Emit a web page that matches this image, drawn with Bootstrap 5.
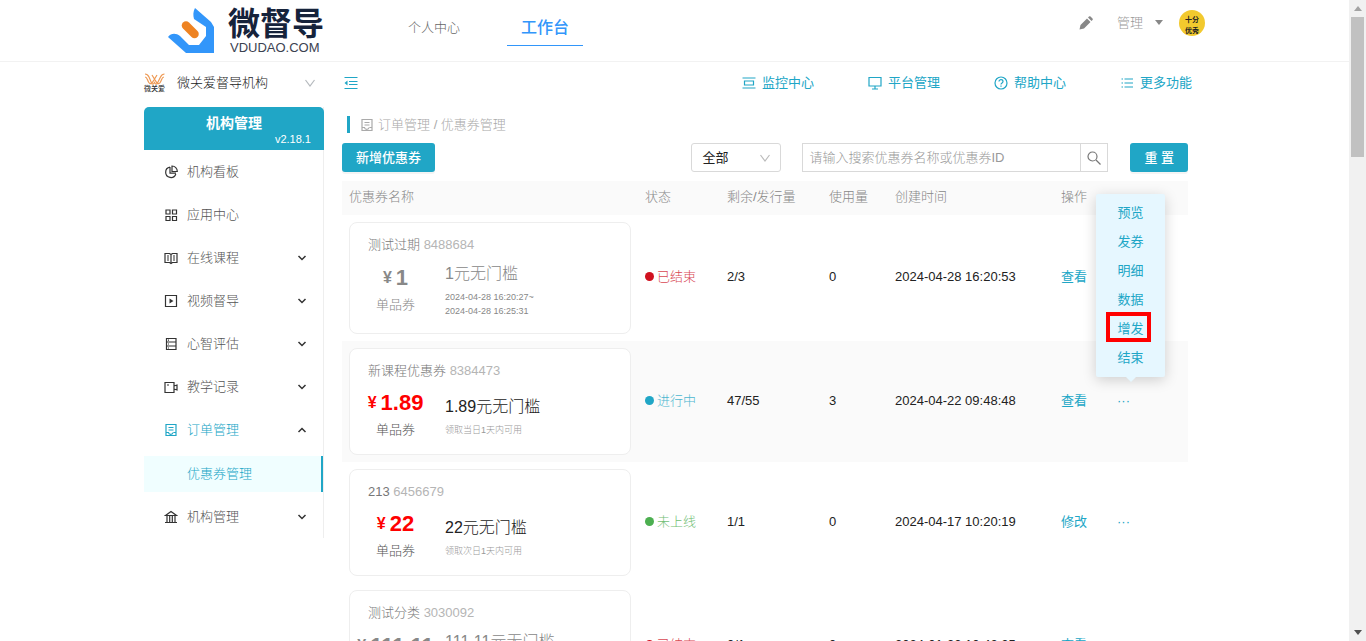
<!DOCTYPE html>
<html lang="zh-CN">
<head>
<meta charset="utf-8">
<meta name="viewport" content="width=device-width, initial-scale=1">
<title>优惠券管理</title>
<link href="https://cdn.jsdelivr.net/npm/bootstrap@5.3.0/dist/css/bootstrap.min.css" rel="stylesheet">
<style>
:root{--teal:#20a6c6;--ink:#222;--muted:#999}
body{font-family:"Liberation Sans","Noto Sans CJK SC",sans-serif;font-size:13px;line-height:20px;font-weight:300;color:var(--ink);background:#fff}
a{color:var(--teal);text-decoration:none}
svg{display:block;flex:none}
.ico{width:14px;height:14px;fill:none;stroke:currentColor;stroke-width:1.2}
.shell{height:100vh}
.pane{overflow-y:auto;overflow-x:hidden;scrollbar-width:none;min-width:0}
.pane::-webkit-scrollbar{display:none}
.wrap{max-width:1061px;margin:0 auto}
/* top bar */
.topbar{border-bottom:1px solid #f2f2f2}
.topbar .wrap{height:61px;padding-left:24px}
.brand-cn{font-size:32px;line-height:34px;font-weight:700;color:#16233b}
.brand-en{font-size:13px;line-height:14px;color:#3b4250;padding-left:2px}
.brand-gap{margin-right:84px}
.tabs{padding-bottom:6px}
.tab-link{color:#666}
.tab-on{font-size:16px;font-weight:500;line-height:24px;color:#3296fa;border-bottom:1px solid #3296fa;padding:6px 14px 5px;margin-left:47px}
.userbox{color:var(--muted);height:45px}
.avatar{width:26px;height:26px;border-radius:50%;background:#f2c92e;color:#222;font-size:7px;line-height:11px;font-weight:700}
.caret{border:4px solid transparent;border-top:5px solid #888;border-bottom:0}
/* tool row */
.tools{height:42px;margin-bottom:3px;padding-right:13px}
.org{width:180px;padding-right:7px}
.org-mini{font-size:7px;line-height:8px;font-weight:500;color:#333}
.quick{gap:54px}
.quick a{font-weight:400}
.quick span{padding-left:2px}
/* sidebar */
.side{width:180px;flex:none;align-self:flex-start;border-right:1px solid #eee}
.side-head{background:var(--teal);color:#fff;height:43px;border-radius:5px 5px 0 0;margin-right:-1px;padding:6px 13px 0}
.side-title{font-size:14px;font-weight:700}
.side-ver{font-size:11px;line-height:12px;font-weight:500}
.menu a{height:43px;padding:0 14px 0 20px;gap:9px;color:#555}
.menu .ico{color:#333}
.menu .open,.menu .open .ico:first-child{color:var(--teal)}
.menu .leaf{background:#f0feff;color:var(--teal);height:36px;margin:5px 0 3px;padding-left:43px;border-right:2px solid var(--teal)}
/* main */
.content{min-width:0;padding:0 17px 0 18px}
.crumb{height:17px;border-left:3px solid var(--teal);margin:9px 0 10px 5px;padding-left:10px;color:#aaa}
.crumb a{color:#aaa}
.filters{height:29px;margin-bottom:9px}
.btn-teal{--bs-btn-bg:var(--teal);--bs-btn-color:#fff;--bs-btn-hover-bg:#1c95b2;--bs-btn-hover-color:#fff;height:29px;padding:0 14px;border:0;border-radius:3px;font-size:13px;line-height:28px;font-weight:500;box-shadow:0 2px 0 #0000000b}
.form-select.kind{width:90px;height:29px;padding:0 10px;border:1px solid #d9d9d9;border-radius:3px;font-size:13px;font-weight:400;color:var(--ink);background-image:none}
.kind-box{margin-right:21px}
.kind-box svg{position:absolute;right:9px;top:8px;color:#bbb;pointer-events:none}
.search{width:306px;margin-right:22px}
.search .form-control{height:29px;border:1px solid #d9d9d9;border-radius:0;font-size:13px;font-weight:300;padding:0 6px;color:#555}
.search .form-control::placeholder{color:var(--muted)}
.search .btn{width:29px;height:29px;padding:0 6px;border:1px solid #d9d9d9;border-radius:0;color:#777}
.grid-table{table-layout:fixed;margin:0;border:0}
.grid-table th,.grid-table td{border:0;padding:7px;background:#fff;vertical-align:middle;box-shadow:none;color:var(--ink)}
.grid-table th{font-weight:300;color:#888;height:34px;padding:4px 7px 6px;background:#fafafa}
.grid-table td{padding-bottom:9px}
.grid-table td:first-child{padding-bottom:7px}
.grid-table td a,.more{font-weight:400}
.grid-table .tint td{background:#fafafa}
.c1{width:296px}.c2{width:82px}.c3{width:102px}.c4{width:66px}.c5{width:166px}
.dot{display:inline-block;width:9px;height:9px;border-radius:50%;background:currentColor;margin-right:3px}
.st-end{color:#d0111f}.st-run{color:var(--teal)}.st-off{color:#4caf50}
.st-txt{opacity:.8}
.coupon{border:1px solid #eee;border-radius:8px;background:#fff;padding:12px 18px 11px}
.coupon.dim{padding-bottom:15px}
.coupon-name{color:#777}
.coupon-name span{color:#b5b5b5}
.coupon-body{margin-top:8px;gap:22px}
.worth{width:55px;flex:none}
.price{height:28px;line-height:28px;font-size:22px;font-weight:700;color:red;gap:4px}
.price small{font-size:16px;font-weight:700}
.sort{line-height:26px;color:#555}
.deal{font-size:16px;line-height:22px;color:var(--ink)}
.terms{font-size:9px;line-height:14px;margin-top:5px;color:#999}
.dim .price,.dim .deal,.dim .sort,.dim .terms{color:#888}
.ops{gap:30px}
.more{border:0;background:none;color:var(--teal);padding:0;font-size:13px;line-height:18px}
/* floating action list */
.pop{position:absolute;left:35px;bottom:34px;width:69px;padding:4px 0 5px;background:#e6f7ff;border-radius:2px;box-shadow:0 3px 14px #0000002e;z-index:5}
.pop::after{content:"";position:absolute;left:30px;bottom:-5px;border:5px solid transparent;border-top-color:#e6f7ff;border-bottom:0}
.pop a{display:block;height:29px;line-height:29px;text-align:center;position:relative}
.pop .ring::after{content:"";position:absolute;left:10px;top:-2px;width:45px;height:30px;border:4px solid red}
/* scroll track */
.track{width:17px;flex:none;background:#f1f1f1;padding:6px 2px}
.thumb{height:140px;background:#c1c1c1}
.arr{border:4px solid transparent}
.arr-up{border-bottom:5px solid #a3a3a3;border-top:0;margin-bottom:6px}
.arr-down{border-top:5px solid #505050;border-bottom:0}
</style>
</head>
<body>
<svg width="0" height="0" class="d-none">
  <symbol id="down" viewBox="0 0 14 14"><path d="M2.500 4l4.500 6 4.500-6"/></symbol>
  <symbol id="chev" viewBox="0 0 14 14"><path d="M3.500 5L7 8.500 10.500 5" stroke-width="1.500"/></symbol>
  <symbol id="chevup" viewBox="0 0 14 14"><path d="M3.500 9L7 5.500 10.500 9" stroke-width="1.500"/></symbol>
  <symbol id="order" viewBox="0 0 14 14"><path d="M2 1.500h10v11H2zM4.500 4.500h5M4.500 7h5M2 9.500h2.500c.3 2.500 4.200 2.500 4.500 0M9.500 9.500H12"/></symbol>
</svg>
<div class="shell d-flex">
<div class="pane flex-grow-1">
  <header class="topbar">
    <div class="wrap d-flex align-items-center">
      <a href="#" class="d-flex align-items-center brand-gap">
        <svg width="48" height="46" viewBox="0 0 48 46"><path d="M0 29C3 25 8 25 12 28l9 9h10l7-9V19L26 11c-1-4-1-7 1-11l16 14 3 5v26H18z" fill="#3296fa"/><path d="M18 17.500L26.500 26" stroke="#ee8322" stroke-width="8.500" stroke-linecap="round"/></svg>
        <span class="ms-2 ps-1"><span class="brand-cn d-block">微督导</span><span class="brand-en d-block">VDUDAO.COM</span></span>
      </a>
      <nav class="tabs d-flex align-items-center">
        <a href="#" class="tab-link">个人中心</a>
        <a href="#" class="tab-on">工作台</a>
      </nav>
      <div class="userbox d-flex align-items-center ms-auto align-self-start">
        <svg width="14" height="14" viewBox="0 0 14 14" fill="#888"><path d="M.5 13.500l1-4.500L8 2.500l3.500 3.500L5 12.500zM9 1.600l1-1c.5-.5 1-.5 1.500 0l2 2c.5.500.5 1 0 1.500l-1 1z"/></svg>
        <a href="#" class="text-reset ms-4 me-1">管理</a><span class="caret ms-2"></span>
        <span class="avatar ms-3 text-center pt-1"><span class="d-block">十分</span><span class="d-block">优秀</span></span>
      </div>
    </div>
  </header>
  <div class="wrap">
    <div class="tools d-flex align-items-center">
      <div class="org d-flex align-items-center">
        <span class="me-2 pe-1">
          <svg width="21" height="12" viewBox="0 0 21 12" fill="none" stroke="#ee9a55" stroke-width="1.200"><path d="M1 1c2 0 3 1 4 3l2.500 6c1 1.500 2 1.500 3-.5 1 2 2 2 3 .5l3-6c1-2 2-3 4-3M1 4c2 0 2 2 3.500 5 1 2 2.500 2 3.500 1l5-8M20 4c-2 0-2 2-3.500 5-1 2-2.500 2-3.500 1L8 2"/></svg>
          <span class="org-mini d-block">微关爱</span>
        </span>
        <span>微关爱督导机构</span>
        <svg class="ico ms-auto text-secondary opacity-50"><use href="#down"/></svg>
      </div>
      <a href="#" class="ms-3 ps-1" aria-label="收起菜单"><svg class="ico"><path d="M.5 1.500h13M5 5.500h8.500M5 8.500h8.500M.5 12.500h13"/><path d="M3.500 4.500v5L.5 7z" fill="currentColor" stroke="none"/></svg></a>
      <nav class="quick d-flex ms-auto">
        <a href="#" class="d-flex align-items-center"><svg class="ico me-1"><path d="M.5 2h13M2.500 5h9v4h-9zM.5 12h13"/></svg><span>监控中心</span></a>
        <a href="#" class="d-flex align-items-center"><svg class="ico me-1"><path d="M1 1.500h12v8.500H1zM7 10v3M4 13h6"/></svg><span>平台管理</span></a>
        <a href="#" class="d-flex align-items-center"><svg class="ico me-1"><circle cx="7" cy="7" r="6"/><path d="M5 5.500c0-2.500 4-2.500 4 0 0 1.500-2 1.300-2 3M7 9.500v1.200"/></svg><span>帮助中心</span></a>
        <a href="#" class="d-flex align-items-center"><svg class="ico me-1"><path d="M4.500 3H13M4.500 7H13M4.500 11H13M1.500 3H3M1.500 7H3M1.500 11H3"/></svg><span>更多功能</span></a>
      </nav>
    </div>
    <div class="d-flex">
      <aside class="side">
        <div class="side-head"><div class="side-title text-center">机构管理</div><div class="side-ver text-end">v2.18.1</div></div>
        <nav class="menu">
          <a href="#" class="d-flex align-items-center"><svg class="ico"><path d="M6 2.200A5.200 5.200 0 1 0 11.800 9M8 1v5.500h5.300C13.300 3.500 11 1 8 1zM6 2v6.200h6"/></svg>机构看板</a>
          <a href="#" class="d-flex align-items-center"><svg class="ico"><path d="M2 2h4v4H2zM8.500 2h4v4h-4zM2 8.500h4v4H2zM8.500 8.500h4v4h-4z"/></svg>应用中心</a>
          <a href="#" class="d-flex align-items-center"><svg class="ico"><path d="M1 2.500h4.500L7 3.500l1.500-1H13v9H8.500L7 12.500l-1.500-1H1zM7 3.500v9M3 5h2M3 7h2M3 9h2M9 5h2M9 7h2M9 9h2"/></svg>在线课程<svg class="ico ms-auto"><use href="#chev"/></svg></a>
          <a href="#" class="d-flex align-items-center"><svg class="ico"><path d="M1.500 1.500h11v11h-11z"/><path d="M5.500 4.500v5L9.500 7z" fill="currentColor" stroke="none"/></svg>视频督导<svg class="ico ms-auto"><use href="#chev"/></svg></a>
          <a href="#" class="d-flex align-items-center"><svg class="ico"><path d="M2.500 1.500h9.500v11H2.500zM2.500 5H12M2.500 9H12M4 3.200h1M4 7h1M4 11h1"/></svg>心智评估<svg class="ico ms-auto"><use href="#chev"/></svg></a>
          <a href="#" class="d-flex align-items-center"><svg class="ico"><path d="M1 2.500h9v10H1zM3 5h2M10 6l3-1v5l-3-1"/></svg>教学记录<svg class="ico ms-auto"><use href="#chev"/></svg></a>
          <a href="#" class="d-flex align-items-center open"><svg class="ico"><use href="#order"/></svg>订单管理<svg class="ico ms-auto"><use href="#chevup"/></svg></a>
          <a href="#" class="d-flex align-items-center leaf">优惠券管理</a>
          <a href="#" class="d-flex align-items-center"><svg class="ico"><path d="M1.500 5.500L7 1.500l5.500 4zM1 12.500h12M3 6v6.500M5.700 6v6.500M8.300 6v6.500M11 6v6.500"/></svg>机构管理<svg class="ico ms-auto"><use href="#chev"/></svg></a>
        </nav>
      </aside>
      <main class="content flex-grow-1">
        <div class="crumb d-flex align-items-center"><svg class="ico me-1"><use href="#order"/></svg><span><a href="#">订单管理</a> / 优惠券管理</span></div>
        <div class="filters d-flex">
          <button class="btn btn-teal" type="button">新增优惠券</button>
          <div class="kind-box position-relative ms-auto">
            <select class="form-select kind" aria-label="优惠券类型"><option>全部</option></select>
            <svg class="ico"><use href="#down"/></svg>
          </div>
          <div class="search d-flex">
            <input class="form-control" type="text" aria-label="搜索优惠券" placeholder="请输入搜索优惠券名称或优惠券ID">
            <button class="btn border-start-0" type="button" aria-label="搜索"><svg class="ico"><circle cx="5.500" cy="5.500" r="4.500"/><path d="M9 9l4.500 4.500"/></svg></button>
          </div>
          <button class="btn btn-teal" type="button">重 置</button>
        </div>
        <table class="table grid-table">
          <colgroup><col class="c1"><col class="c2"><col class="c3"><col class="c4"><col class="c5"><col></colgroup>
          <thead><tr><th>优惠券名称</th><th>状态</th><th>剩余/发行量</th><th>使用量</th><th>创建时间</th><th>操作</th></tr></thead>
          <tbody>
            <tr>
              <td><div class="coupon dim"><div class="coupon-name">测试过期 <span>8488684</span></div>
                <div class="coupon-body d-flex align-items-center"><div class="worth text-center"><div class="price d-flex justify-content-center"><small>¥</small>1</div><div class="sort">单品券</div></div>
                <div><div class="deal">1元无门槛</div><div class="terms">2024-04-28 16:20:27~<br>2024-04-28 16:25:31</div></div></div></div></td>
              <td class="text-nowrap"><span class="st-end"><span class="dot"></span><span class="st-txt">已结束</span></span></td><td>2/3</td><td>0</td><td>2024-04-28 16:20:53</td>
              <td><a href="#">查看</a></td>
            </tr>
            <tr class="tint">
              <td><div class="coupon"><div class="coupon-name">新课程优惠券 <span>8384473</span></div>
                <div class="coupon-body d-flex align-items-center"><div class="worth text-center"><div class="price d-flex justify-content-center"><small>¥</small>1.89</div><div class="sort">单品券</div></div>
                <div><div class="deal">1.89元无门槛</div><div class="terms">领取当日1天内可用</div></div></div></div></td>
              <td class="text-nowrap"><span class="st-run"><span class="dot"></span><span class="st-txt">进行中</span></span></td><td>47/55</td><td>3</td><td>2024-04-22 09:48:48</td>
              <td><div class="ops d-flex position-relative"><a href="#">查看</a><button class="more" type="button">···</button>
                <div class="pop"><a href="#">预览</a><a href="#">发券</a><a href="#">明细</a><a href="#">数据</a><a href="#" class="ring">增发</a><a href="#">结束</a></div></div></td>
            </tr>
            <tr>
              <td><div class="coupon"><div class="coupon-name">213 <span>6456679</span></div>
                <div class="coupon-body d-flex align-items-center"><div class="worth text-center"><div class="price d-flex justify-content-center"><small>¥</small>22</div><div class="sort">单品券</div></div>
                <div><div class="deal">22元无门槛</div><div class="terms">领取次日1天内可用</div></div></div></div></td>
              <td class="text-nowrap"><span class="st-off"><span class="dot"></span><span class="st-txt">未上线</span></span></td><td>1/1</td><td>0</td><td>2024-04-17 10:20:19</td>
              <td><div class="ops d-flex"><a href="#">修改</a><button class="more" type="button">···</button></div></td>
            </tr>
            <tr>
              <td><div class="coupon dim"><div class="coupon-name">测试分类 <span>3030092</span></div>
                <div class="coupon-body d-flex align-items-center"><div class="worth text-center"><div class="price d-flex justify-content-center"><small>¥</small>111.11</div><div class="sort">单品券</div></div>
                <div><div class="deal">111.11元无门槛</div><div class="terms">2024-01-22 10:42:25~<br>2024-01-23 10:42:25</div></div></div></div></td>
              <td class="text-nowrap"><span class="st-end"><span class="dot"></span><span class="st-txt">已结束</span></span></td><td>0/1</td><td>0</td><td>2024-01-22 10:42:25</td>
              <td><a href="#">查看</a></td>
            </tr>
          </tbody>
        </table>
      </main>
    </div>
  </div>
</div>
<div class="track d-flex flex-column" aria-hidden="true"><span class="arr arr-up align-self-center"></span><div class="thumb"></div><span class="arr arr-down align-self-center mt-auto"></span></div>
</div>
<script src="https://cdn.jsdelivr.net/npm/bootstrap@5.3.0/dist/js/bootstrap.bundle.min.js"></script>
</body>
</html>
